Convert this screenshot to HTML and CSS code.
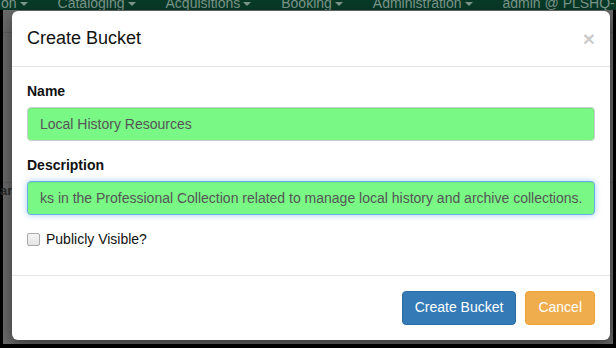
FILE: index.html
```html
<!DOCTYPE html>
<html>
<head>
<meta charset="utf-8">
<link rel="stylesheet" href="styles.css">
</head>
<body>
<div class="screen">
  <div class="navbar">
    <div class="nav-items">
      <span class="nav-item first">on<i class="caret"></i></span>
      <span class="nav-item">Cataloging<i class="caret"></i></span>
      <span class="nav-item">Acquisitions<i class="caret"></i></span>
      <span class="nav-item">Booking<i class="caret"></i></span>
      <span class="nav-item">Administration<i class="caret"></i></span>
      <span class="nav-item">admin @ PLSHQ-</span>
    </div>
  </div>
  <div class="backdrop">
    <div class="under-row r1"></div>
    <div class="under-row r2"><span class="under-text">ar</span></div>
  </div>

  <div class="modal">
    <div class="modal-header">
      <h4 class="modal-title">Create Bucket</h4>
      <span class="close">&times;</span>
    </div>
    <div class="modal-body">
      <div class="form-group">
        <label class="control-label">Name</label>
        <input class="form-control" type="text" value="Local History Resources">
      </div>
      <div class="form-group">
        <label class="control-label">Description</label>
        <input class="form-control focused" type="text" value="ks in the Professional Collection related to manage local history and archive collections.">
      </div>
      <div class="checkbox">
        <label><input type="checkbox" class="check"><span>Publicly Visible?</span></label>
      </div>
    </div>
    <div class="modal-footer">
      <button class="btn btn-primary">Create Bucket</button>
      <button class="btn btn-warning">Cancel</button>
    </div>
  </div>
</div>
</body>
</html>
```
FILE: styles.css
```css
* { box-sizing: border-box; }
html, body { margin: 0; padding: 0; }
body {
  font-family: "Liberation Sans", Arial, sans-serif;
  font-size: 14px;
  line-height: 1.42857;
  color: #333;
  background: #000;
}
.screen {
  position: relative;
  width: 616px;
  height: 348px;
  display: flex;
  flex-direction: column;
  overflow: hidden;
}
.navbar {
  height: 10px;
  background: #083a28;
  overflow: hidden;
  flex: none;
}
.nav-items {
  display: flex;
  margin-top: -7px;
  white-space: nowrap;
  color: #7e978b;
  font-size: 14px;
  line-height: 20px;
}
.nav-item { margin-right: 30px; display: inline-flex; align-items: center; }
.nav-item.first { margin-left: 1px; }
.caret {
  display: inline-block;
  width: 0; height: 0;
  margin-left: 3px;
  margin-top: 2px;
  border-top: 4px solid #7e978b;
  border-left: 4px solid transparent;
  border-right: 4px solid transparent;
}
.backdrop {
  flex: 1;
  background: #6b6b6b;
  border-left: 3px solid #000;
  border-right: 3px solid #000;
  border-bottom: 4px solid #000;
  display: flex;
  flex-direction: column;
}
.under-row { border-bottom: 1px solid #5f5f5f; }
.r1 { height: 23px; }
.r2 { height: 150px; }
.under-text {
  display: block;
  margin-top: 151px;
  font-weight: bold;
  color: #2a2a2a;
  font-size: 13px;
  line-height: 14px;
  margin-left: -3px;
}

.modal {
  position: absolute;
  left: 12px;
  top: 11px;
  width: 598px;
  background: #fff;
  border-radius: 6px;
  box-shadow: 0 5px 15px rgba(0,0,0,.5);
}
.modal-header {
  padding: 15px;
  border-bottom: 1px solid #e5e5e5;
  display: flex;
  justify-content: space-between;
  align-items: flex-start;
}
.modal-title {
  margin: 0;
  font-size: 18px;
  font-weight: normal;
  line-height: 25px;
  color: #111;
}
.close {
  font-size: 21px;
  font-weight: bold;
  line-height: 1;
  color: #000;
  opacity: .2;
  margin-top: 2px;
}
.modal-body { padding: 15px; }
.form-group { margin-bottom: 15px; }
.control-label {
  display: inline-block;
  margin-bottom: 5px;
  font-weight: bold;
  color: #111;
}
.form-control {
  display: block;
  width: 100%;
  height: 34px;
  padding: 6px 12px;
  font-family: "Liberation Sans", Arial, sans-serif;
  font-size: 14px;
  line-height: 1.42857;
  color: #555;
  background: #79f886;
  border: 1px solid #ccc;
  border-radius: 4px;
  box-shadow: inset 0 1px 1px rgba(0,0,0,.075);
  outline: none;
}
.form-control.focused {
  border-color: #66afe9;
  box-shadow: inset 0 1px 1px rgba(0,0,0,.075), 0 0 6px rgba(102,175,233,.6);
}
.checkbox { margin: 0 0 10px; }
.checkbox label {
  display: flex;
  align-items: center;
  min-height: 20px;
  color: #111;
}
.check {
  appearance: none;
  -webkit-appearance: none;
  width: 13px;
  height: 13px;
  margin: 0 6px 0 0;
  border: 1px solid #a9a9a9;
  border-radius: 2px;
  background: linear-gradient(#f4f4f4, #e4e4e4);
}
.modal-footer {
  padding: 15px;
  border-top: 1px solid #e5e5e5;
  display: flex;
  justify-content: flex-end;
  gap: 9px;
}
.btn {
  display: inline-block;
  padding: 6px 12px;
  font-family: "Liberation Sans", Arial, sans-serif;
  font-size: 14px;
  line-height: 1.42857;
  border: 1px solid transparent;
  border-radius: 4px;
  color: #fff;
  height: 34px;
}
.btn-primary { background: #337ab7; border-color: #2e6da4; }
.btn-warning { background: #f0ad4e; border-color: #eea236; }
```
